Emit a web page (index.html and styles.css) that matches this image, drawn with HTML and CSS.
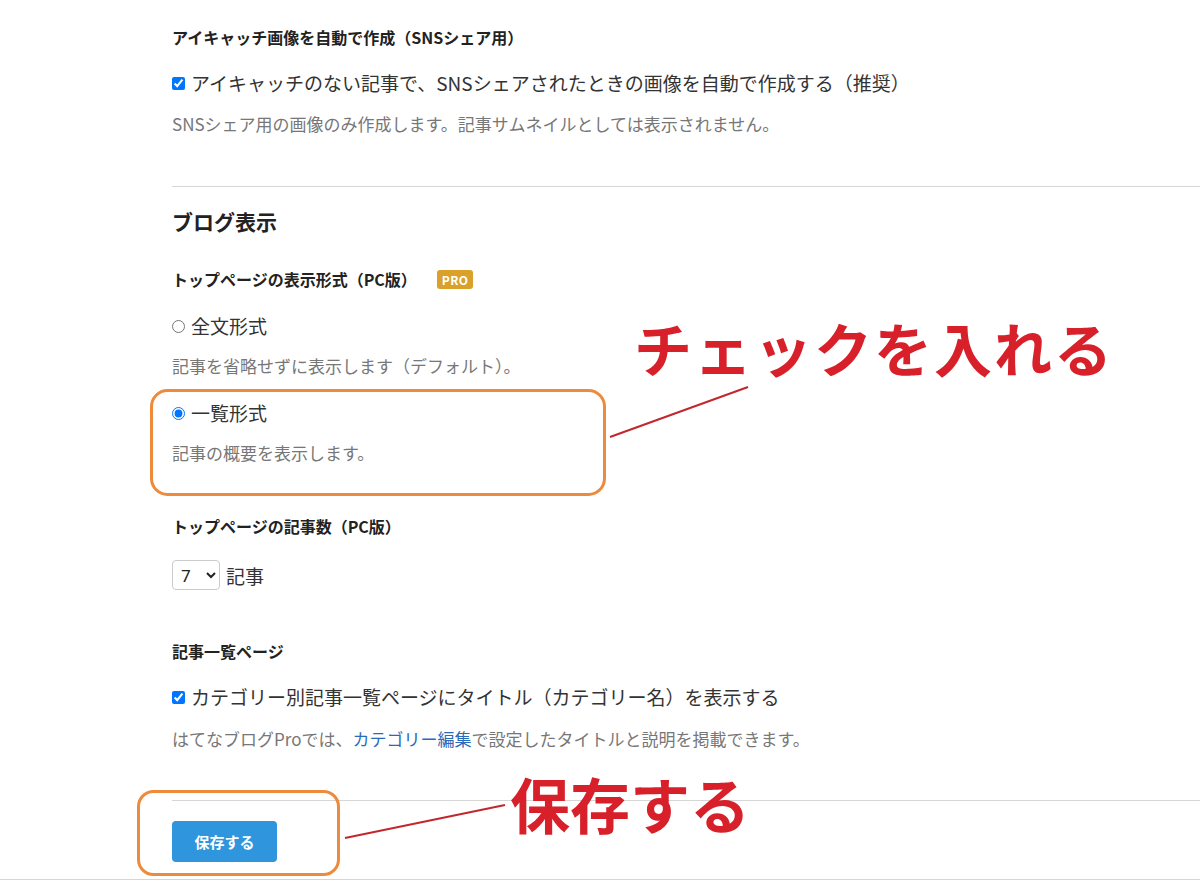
FILE: index.html
```html
<!DOCTYPE html>
<html lang="ja">
<head>
<meta charset="utf-8">
<link rel="stylesheet" href="styles.css">
</head>
<body>
<div class="page">
  <section class="section first">
    <div class="field-title">アイキャッチ画像を自動で作成（SNSシェア用）</div>
    <label class="option opt-a"><input type="checkbox" checked><span>アイキャッチのない記事で、SNSシェアされたときの画像を自動で作成する（推奨）</span></label>
    <p class="help help-a">SNSシェア用の画像のみ作成します。記事サムネイルとしては表示されません。</p>
  </section>

  <section class="section blog">
    <h2 class="section-title">ブログ表示</h2>
    <div class="field-title ft-format">トップページの表示形式（PC版）<span class="pro">PRO</span></div>
    <label class="option opt-r1"><input type="radio" name="fmt"><span>全文形式</span></label>
    <p class="help help-r">記事を省略せずに表示します（デフォルト）。</p>
    <label class="option opt-r2"><input type="radio" name="fmt" checked><span>一覧形式</span></label>
    <p class="help help-r">記事の概要を表示します。</p>

    <div class="field-title ft-count">トップページの記事数（PC版）</div>
    <div class="count-row">
      <select class="count-select"><option>7</option></select>
      <span class="count-unit">記事</span>
    </div>

    <div class="field-title ft-list">記事一覧ページ</div>
    <label class="option opt-a"><input type="checkbox" checked><span>カテゴリー別記事一覧ページにタイトル（カテゴリー名）を表示する</span></label>
    <p class="help help-list">はてなブログProでは、<a href="#" class="link">カテゴリー編集</a>で設定したタイトルと説明を掲載できます。</p>
  </section>

  <div class="actions">
    <button class="save-btn" type="button">保存する</button>
  </div>
</div>

<svg class="marks" width="1200" height="882" viewBox="0 0 1200 882" aria-hidden="true">
  <rect x="151.5" y="390.5" width="453" height="104" rx="16" ry="16" fill="none" stroke="#ee8a3b" stroke-width="3"/>
  <rect x="138.5" y="791.5" width="200" height="83" rx="15" ry="15" fill="none" stroke="#ee8a3b" stroke-width="3"/>
  <line x1="610" y1="437" x2="748" y2="387" stroke="#c1272d" stroke-width="2"/>
  <line x1="345" y1="838" x2="505" y2="805" stroke="#c1272d" stroke-width="2"/>
</svg>
<div class="note note-check">チェックを入れる</div>
<div class="note note-save">保存する</div>
</body>
</html>
```

FILE: styles.css
```css
* { box-sizing: border-box; }
html, body {
  margin: 0;
  padding: 0;
  background: #fff;
}
body {
  width: 1200px;
  height: 882px;
  overflow: hidden;
  position: relative;
  font-family: "Noto Sans CJK JP", "Noto Sans", sans-serif;
  color: #333;
}
.page {
  padding-left: 172px;
  padding-top: 25px;
}
.section { display: block; }
.field-title {
  font-size: 16px;
  font-weight: bold;
  line-height: 24px;
  height: 24px;
  color: #222;
  display: flex;
  align-items: center;
}
.option {
  display: flex;
  align-items: center;
  height: 28px;
  line-height: 28px;
  font-size: 19px;
  color: #333;
  margin-top: 20px;
}
.option input {
  margin: 0 6px 0 0;
  width: 13px;
  height: 13px;
  flex: none;
}
.help {
  margin: 13px 0 0;
  font-size: 17px;
  line-height: 26px;
  height: 26px;
  color: #777;
}
.help-a { margin-top: 14px; }
.first { padding-bottom: 49px; }
.blog {
  border-top: 1px solid #d6d6d6;
  padding-top: 19px;
  padding-bottom: 48px;
}
.section-title {
  margin: 0;
  font-size: 21px;
  font-weight: bold;
  line-height: 30px;
  height: 30px;
  color: #222;
}
.ft-format { margin-top: 31px; }
.opt-r1 { margin-top: 21px; }
.opt-r2 { margin-top: 20px; }
.pro {
  display: inline-block;
  margin-left: 20px;
  background: #d9a12a;
  color: #fff;
  font-size: 12px;
  font-weight: bold;
  line-height: 19px;
  height: 19px;
  padding: 0 5px;
  border-radius: 3px;
  letter-spacing: 0.3px;
}
.ft-count { margin-top: 48px; }
.count-row {
  margin-top: 22px;
  height: 30px;
  display: flex;
  align-items: center;
}
.count-select {
  width: 48px;
  height: 30px;
  font-size: 17px;
  font-family: "Noto Sans", "Noto Sans CJK JP", sans-serif;
  color: #222;
  border: 1px solid #ccc;
  border-radius: 4px;
  background: #fff;
  padding: 0 2px 0 4px;
}
.count-unit {
  margin-left: 6px;
  font-size: 19px;
  color: #333;
}
.ft-list { margin-top: 49px; }
.help-list { margin-top: 15px; }
.link { color: #2a6ab8; text-decoration: none; }
.actions {
  border-top: 1px solid #d6d6d6;
  border-bottom: 1px solid #d6d6d6;
  margin-left: -172px;
  padding: 20px 0 17px 172px;
  position: relative;
}
.actions::before {
  content: "";
  position: absolute;
  left: 0;
  top: -1px;
  width: 172px;
  height: 1px;
  background: #fff;
}
.save-btn {
  width: 105px;
  height: 41px;
  border: none;
  border-radius: 4px;
  background: #2f95dc;
  color: #fff;
  font-family: "Noto Sans CJK JP", sans-serif;
  font-size: 15px;
  font-weight: bold;
  padding: 0;
}
.marks {
  position: absolute;
  left: 0;
  top: 0;
  pointer-events: none;
}
.note {
  position: absolute;
  color: #d8202a;
  font-weight: bold;
  white-space: nowrap;
  line-height: 1;
  font-family: "Noto Sans CJK JP", sans-serif;
}
.note-check {
  left: 634px;
  top: 318px;
  font-size: 58px;
  letter-spacing: 2px;
}
.note-save {
  left: 510px;
  top: 773px;
  font-size: 60px;
}
```
